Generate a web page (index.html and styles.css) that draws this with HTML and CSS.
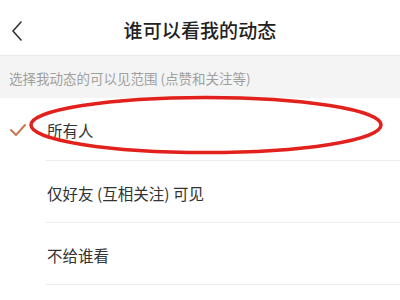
FILE: index.html
```html
<!DOCTYPE html>
<html lang="zh">
<head>
<meta charset="utf-8">
<link rel="stylesheet" href="styles.css">
</head>
<body>
<div class="page">
  <header class="nav">
    <svg class="back" width="14" height="22" viewBox="0 0 14 22"><path d="M11 2 L3 11 L11 20" fill="none" stroke="#333" stroke-width="1.6" stroke-linecap="round" stroke-linejoin="round"/></svg>
    <h1 class="title">谁可以看我的动态</h1>
  </header>
  <div class="hint">选择我动态的可以见范围 (点赞和关注等)</div>
  <ul class="options">
    <li class="option selected">
      <svg class="check" width="18" height="14" viewBox="0 0 18 14"><path d="M2 7 L7 12 L16 2" fill="none" stroke="#c97a4e" stroke-width="2" stroke-linecap="round" stroke-linejoin="round"/></svg>
      <span class="label">所有人</span>
    </li>
    <li class="option"><span class="label">仅好友 (互相关注) 可见</span></li>
    <li class="option"><span class="label">不给谁看</span></li>
  </ul>
  <svg class="mark" width="400" height="300" viewBox="0 0 400 300"><ellipse cx="206" cy="125" rx="175" ry="27.5" fill="none" stroke="#e2211d" stroke-width="3.5"/></svg>
</div>
</body>
</html>
```
FILE: styles.css
```css
* { box-sizing: border-box; }
html, body { margin: 0; padding: 0; background: #fff; }
body { font-family: "Noto Sans CJK SC", "Noto Sans", sans-serif; color: #333; }
.page { position: relative; width: 400px; height: 300px; overflow: hidden; background: #fff; }
.nav { position: relative; height: 56px; display: flex; align-items: center; justify-content: center; border-bottom: 1px solid #e9e9e9; background: #fff; }
.back { position: absolute; left: 10px; top: 20px; }
.title { margin: 0; font-size: 19px; font-weight: 500; color: #222; letter-spacing: 0.1px; padding-top: 4px; }
.hint { height: 42px; background: #f4f4f4; font-size: 13.5px; color: #a0a0a0; display: flex; align-items: center; padding-left: 9px; padding-top: 2px; }
.options { list-style: none; margin: 0; padding: 0; }
.option { position: relative; height: 62px; margin-left: 46px; border-bottom: 1px solid #ececec; display: flex; align-items: center; font-size: 15.5px; color: #333; padding-top: 2px; }
.option.selected { height: 63px; }
.check { position: absolute; left: -37px; top: 25px; }
.label { margin-left: 1px; }
.mark { position: absolute; left: 0; top: 0; pointer-events: none; }
```
